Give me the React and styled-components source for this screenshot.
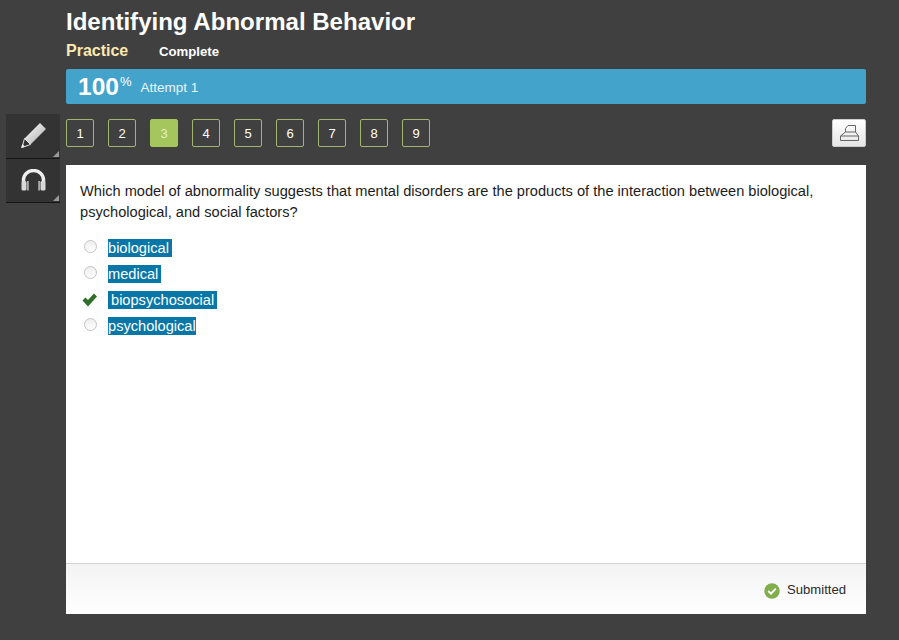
import React from "react";
import styled, { createGlobalStyle } from "styled-components";

const Global = createGlobalStyle`
  html, body { margin: 0; padding: 0; background: #404040; }
  body { font-family: "Liberation Sans", Arial, sans-serif; }
`;
const Page = styled.div`
  width: 899px; height: 640px; background: #404040; overflow: hidden;
  display: grid; grid-template-columns: 66px 800px;
`;
const Rail = styled.div`
  padding-top: 114px; padding-left: 6px;
  display: flex; flex-direction: column;
`;
const Tool = styled.button`
  box-sizing: border-box; width: 54px; height: 44.5px; border: 0; padding: 0 0 1px; background: #333;
  border-bottom: 1px solid #161616; display: flex; align-items: center; justify-content: center;
  position: relative;
  &::after {
    content: ""; position: absolute; right: 1px; bottom: 1px; width: 0; height: 0;
    border-style: solid; border-width: 0 0 6px 6px; border-color: transparent transparent #999 transparent;
  }
`;
const Main = styled.div`display: flex; flex-direction: column;`;
const Title = styled.h1`
  margin: 8px 0 0; font-size: 24.05px; line-height: 27px; font-weight: 700; color: #fff;
`;
const SubRow = styled.div`display: flex; align-items: baseline; margin-top: 7px; height: 20px;`;
const Practice = styled.span`font-size: 16px; font-weight: 700; color: #fbe9b0; width: 93px;`;
const Complete = styled.span`font-size: 13.2px; font-weight: 700; color: #fff;`;
const Progress = styled.div`
  margin-top: 7px; height: 35px; background: #43a3cb; border-radius: 2px;
  display: flex; align-items: center; padding-left: 12px; color: #fff; box-sizing: border-box;
`;
const Score = styled.span`font-size: 24.5px; font-weight: 700; line-height: 35px;`;
const Pct = styled.span`font-size: 13px; position: relative; top: -5px; margin-left: 1px;`;
const Attempt = styled.span`font-size: 13.5px; margin-left: 9px; color: #eaf5fa; position: relative; top: 1px;`;
const NavRow = styled.div`
  display: flex; align-items: center; justify-content: space-between; height: 61px; padding-bottom: 3px; box-sizing: border-box;
`;
const Pages = styled.div`display: flex; gap: 14px;`;
const PageBtn = styled.div`
  box-sizing: border-box; width: 28px; height: 28px; border-radius: 2px;
  border: 1px solid ${p => (p.$active ? "#a4c65c" : "#a3b56f")};
  background: ${p => (p.$active ? "#a4c65c" : "transparent")};
  color: ${p => (p.$active ? "#e4efc8" : "#fff")};
  font-size: 13px; display: flex; align-items: center; justify-content: center;
`;
const Print = styled.button`
  box-sizing: border-box; width: 34px; height: 28px; padding: 0; border: 1px solid #ccc; border-radius: 2px;
  background: linear-gradient(#fff, #e6e6e6); display: flex; align-items: center; justify-content: center;
`;
const Card = styled.div`
  height: 449px; background: #fff; display: flex; flex-direction: column;
`;
const Body = styled.div`flex: 1; padding: 16px 14px 0;`;
const Question = styled.p`
  margin: 0; font-size: 14.62px; line-height: 21px; color: #1c1c1c;
`;
const Options = styled.div`margin-top: 12px; display: flex; flex-direction: column;`;
const Option = styled.div`display: flex; align-items: center; height: 26px;`;
const Mark = styled.div`
  width: 28px; flex: none; display: flex; align-items: center; box-sizing: border-box;
  padding-left: ${p => p.$pl}px;
`;
const Radio = styled.div`
  box-sizing: border-box; width: 13px; height: 13px; border-radius: 50%;
  border: 1px solid #c4c4c4; background: linear-gradient(#eee, #fff); margin-top: -3px;
`;
const Label = styled.span`
  background: #0877a7; color: #fff; font-size: 14.62px; line-height: 18px;
  padding-left: ${p => p.$pl || 0}px; padding-right: ${p => p.$pr || 0}px;
`;
const Footer = styled.div`
  height: 51px; box-sizing: border-box; border-top: 1px solid #d2d2d2;
  background: linear-gradient(#f3f3f3, #fff);
  display: flex; align-items: center; justify-content: flex-end; padding: 0 20px 0 0; gap: 7px;
`;
const Status = styled.span`font-size: 13.1px; color: #2a2a2a;`;
const OkIcon = styled.svg`position: relative; top: 2px;`;

const Pencil = () => (
  <svg width="27" height="27" viewBox="0 0 27 27">
    <defs><linearGradient id="pg" x1="0" y1="0" x2="1" y2="1"><stop offset="0" stopColor="#fff"/><stop offset="1" stopColor="#aaa"/></linearGradient></defs>
    <path d="M20 1 L26 7 L10.5 22.5 L4.5 16.5 Z" fill="url(#pg)"/>
    <path d="M4.5 16.5 L10.5 22.5 L2 25.5 Z" fill="#333" stroke="#e8e8e8" strokeWidth="1"/>
    <path d="M1 26 L2.4 22 L5 24.6 Z" fill="#eee"/>
  </svg>
);
const Headphones = () => (
  <svg width="27" height="22" viewBox="0 0 27 22" fill="none">
    <path d="M3.5 13 V11 A10 9.5 0 0 1 23.5 11 V13" stroke="#eee" strokeWidth="3.4"/>
    <rect x="1.5" y="12" width="5" height="9.5" rx="1.5" fill="#d8d8d8"/>
    <rect x="7" y="12" width="1.8" height="9.5" fill="#aaa"/>
    <rect x="18.2" y="12" width="1.8" height="9.5" fill="#aaa"/>
    <rect x="20.5" y="12" width="5" height="9.5" rx="1.5" fill="#d8d8d8"/>
  </svg>
);
const Printer = () => (
  <svg width="19" height="16" viewBox="0 0 19 16" fill="none" stroke="#666" strokeWidth="1">
    <path d="M5.5 7 V3.5 L8 0.5 H15.5 V7"/>
    <path d="M5.5 7 L0.5 11 V15.5 H18.5 V11 L15.5 7 Z"/>
    <path d="M0.5 11 H18.5"/>
  </svg>
);
const Check = () => (
  <svg width="15" height="14" viewBox="0 0 15 14">
    <path d="M0.5 7.5 L3.5 4.5 L6 7 L12 0.5 L15 3.5 L6 13.5 Z" fill="#2f6f2a"/>
  </svg>
);
const Ok = () => (
  <OkIcon width="16" height="16" viewBox="0 0 16 16">
    <circle cx="8" cy="8" r="7.7" fill="#7fae4a"/>
    <path d="M4.2 8 L7 10.7 L11.8 5.6" stroke="#fff" strokeWidth="2" fill="none"/>
  </OkIcon>
);

export default function App() {
  return (
    <Page>
      <Global />
      <Rail>
        <Tool><Pencil /></Tool>
        <Tool><Headphones /></Tool>
      </Rail>
      <Main>
        <Title>Identifying Abnormal Behavior</Title>
        <SubRow><Practice>Practice</Practice><Complete>Complete</Complete></SubRow>
        <Progress>
          <Score>100</Score><Pct>%</Pct><Attempt>Attempt 1</Attempt>
        </Progress>
        <NavRow>
          <Pages>
            {[1,2,3,4,5,6,7,8,9].map(n => <PageBtn key={n} $active={n===3}>{n}</PageBtn>)}
          </Pages>
          <Print><Printer /></Print>
        </NavRow>
        <Card>
          <Body>
            <Question>Which model of abnormality suggests that mental disorders are the products of the interaction between biological, psychological, and social factors?</Question>
            <Options>
              <Option><Mark $pl={4}><Radio /></Mark><Label $pr={3}>biological</Label></Option>
              <Option><Mark $pl={4}><Radio /></Mark><Label $pr={3}>medical</Label></Option>
              <Option><Mark $pl={2}><Check /></Mark><Label $pl={3} $pr={3}>biopsychosocial</Label></Option>
              <Option><Mark $pl={4}><Radio /></Mark><Label>psychological</Label></Option>
            </Options>
          </Body>
          <Footer><Ok /><Status>Submitted</Status></Footer>
        </Card>
      </Main>
    </Page>
  );
}
